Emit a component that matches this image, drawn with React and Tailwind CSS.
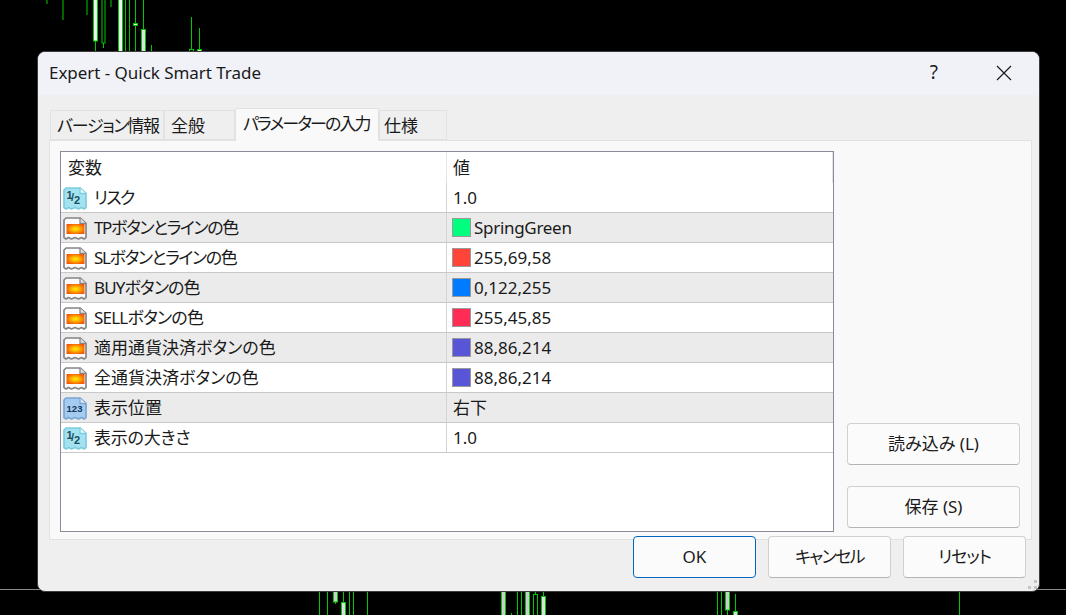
import React from 'react';

const G = '#00c800';

// [x, y1, y2] wicks and [x, y, w, h, fill] bodies of the chart behind the dialog
const wicks = [
  [47, 0, 4], [63, 0, 20], [87, 0, 15], [95.5, 41, 52], [103.5, 43, 48], [111, 0, 7],
  [125.5, 0, 52], [129.5, 0, 52], [135.5, 0, 52], [143.5, 0, 30], [151.5, 45, 52],
  [191.5, 17, 49], [199.5, 28, 49],
  [319.5, 591, 615], [327.5, 591, 615], [335.5, 602, 604], [343.5, 591, 602], [367.5, 591, 615],
  [511.5, 613, 615], [517.5, 591, 615], [521.5, 591, 615], [535.5, 591, 594], [543.5, 591, 596],
  [717.5, 591, 615], [721.5, 591, 615], [727.5, 610, 615], [735.5, 594, 611], [959.5, 591, 615],
];
const bodies = [
  [93.5, -2, 4, 43, '#f0f0f0'], [102, -2, 3, 45, '#000'], [118.5, -2, 4, 60, '#f0f0f0'],
  [133.5, 23.5, 4, 2, '#f0f0f0'], [141.5, 29.5, 4, 24, '#e0e0e0'], [189.5, 49.5, 4, 4, '#000'],
  [197.5, 49.5, 4, 4, '#ddd'],
  [333.5, 590, 4, 12, '#ccc'], [341.5, 602.5, 4, 16, '#ddd'], [349.5, 590, 4, 28, '#000'],
  [501.5, 590, 4, 28, '#ccc'], [525.5, 590, 4, 28, '#ccc'], [533.5, 594.5, 4, 24, '#000'],
  [541.5, 596.5, 4, 22, '#ddd'], [725.5, 590, 4, 20, '#ccc'], [733.5, 611.5, 4, 8, '#ddd'],
];

function Chart() {
  return (
    <svg className="absolute inset-0" width="1066" height="615">
      <path d="M0 589.5H40M1036 589.5H1066" stroke="#8a8a8a" />
      {wicks.map(([x, a, b], i) => (
        <path key={i} d={`M${x} ${a}V${b}`} stroke={G} />
      ))}
      {bodies.map(([x, y, w, h, fill], i) => (
        <rect key={i} x={x} y={y} width={w} height={h} fill={fill} stroke={G} />
      ))}
    </svg>
  );
}

const DOC = 'M3 1H17L23 6.5V20.5L21 22L18.5 20.5L15.5 22L12 20.5L8.5 22L5.5 20.5L3 22L1 20.5V3Z';

function ParamIcon({ kind }) {
  if (kind === 'color') {
    return (
      <svg width="24" height="24" viewBox="0 0 24 24" className="shrink-0">
        <defs>
          <radialGradient id="heat" cx="0.5" cy="0.5" r="0.55">
            <stop offset="0" stopColor="#fff000" />
            <stop offset="0.35" stopColor="#ffc000" />
            <stop offset="1" stopColor="#f25a08" />
          </radialGradient>
        </defs>
        <path d={DOC} fill="#fbfbfb" stroke="#858585" strokeWidth="1.7" strokeLinejoin="round" />
        <path d="M17 1V6.5H23" fill="#e4e4e4" stroke="#858585" strokeWidth="1.3" />
        <rect x="3.5" y="7" width="18" height="10" fill="url(#heat)" />
      </svg>
    );
  }
  const num = kind === 'int';
  const ink = num ? '#14365c' : '#1d4d5c';
  const edge = num ? '#7aa6d4' : '#7fcbde';
  return (
    <svg width="24" height="24" viewBox="0 0 24 24" className="shrink-0">
      <path d={DOC} fill={num ? '#a6cbf0' : '#a3e2f0'} stroke={edge} strokeWidth="1.7" strokeLinejoin="round" />
      <path d="M17 1V6.5H23" fill={num ? '#dbe9f8' : '#e4f8fb'} stroke={edge} strokeWidth="1.3" />
      {num ? (
        <text x="11.5" y="15" textAnchor="middle" fontSize="9.5" fontWeight="700" fontFamily="Liberation Sans, sans-serif" fill={ink}>
          123
        </text>
      ) : (
        <g fontSize="11" fontFamily="Liberation Sans, sans-serif" fill={ink} fontWeight="700">
          <text x="3.5" y="12">1</text>
          <text x="8" y="14">/</text>
          <text x="11" y="17">2</text>
        </g>
      )}
    </svg>
  );
}

const rows = [
  { icon: 'half', name: 'リスク', fit: 'tracking-[-1.6px]', value: '1.0' },
  { icon: 'color', name: 'TPボタンとラインの色', fit: 'tracking-[-1.4px]', value: 'SpringGreen', swatch: 'bg-[#00ff7f]' },
  { icon: 'color', name: 'SLボタンとラインの色', fit: 'tracking-[-1.4px]', value: '255,69,58', swatch: 'bg-[#ff453a]' },
  { icon: 'color', name: 'BUYボタンの色', fit: 'tracking-[-0.9px]', value: '0,122,255', swatch: 'bg-[#007aff]' },
  { icon: 'color', name: 'SELLボタンの色', fit: 'tracking-[-0.8px]', value: '255,45,85', swatch: 'bg-[#ff2d55]' },
  { icon: 'color', name: '適用通貨決済ボタンの色', value: '88,86,214', swatch: 'bg-[#5856d6]' },
  { icon: 'color', name: '全通貨決済ボタンの色', value: '88,86,214', swatch: 'bg-[#5856d6]' },
  { icon: 'int', name: '表示位置', value: '右下' },
  { icon: 'half', name: '表示の大きさ', fit: 'tracking-[-0.2px]', value: '1.0' },
];

function Tab({ active, className, children }) {
  return (
    <div
      className={`flex items-center whitespace-nowrap border border-[#e2e2e2] ${
        active ? 'relative z-10 -mb-px h-[33px] border-b-0 bg-[#f9f9f9] pb-[2px]' : 'h-[30px] bg-[#efefef] pt-[1px]'
      } ${className}`}
    >
      {children}
    </div>
  );
}

function Btn({ primary, className = '', children }) {
  return (
    <button
      className={`flex h-[42px] items-center justify-center rounded-[4px] border bg-[#fbfbfb] text-[17px] text-[#1a1a1a] ${
        primary ? 'border-[#0067c0]' : 'border-[#d0d0d0] border-b-[#b4b4b4]'
      } ${className}`}
    >
      {children}
    </button>
  );
}

export default function App() {
  return (
    <div className="relative h-[615px] w-[1066px] overflow-hidden bg-black font-['Noto_Sans','Noto_Sans_CJK_JP',sans-serif] text-[#1a1a1a] [font-feature-settings:'palt']">
      <Chart />
      <div className="absolute left-[37px] top-[51px] flex h-[541px] w-[1003px] flex-col overflow-hidden rounded-[8px] border border-[#3c3c3c] bg-[#efefef]">
        <div className="flex h-[43px] shrink-0 items-center bg-[#f0f2f8] pb-[2px] pl-[11px] pr-[27px] text-[17px]">
          <span className="tracking-[-0.04px]">Expert - Quick Smart Trade</span>
          <span className="ml-auto text-[19px]">?</span>
          <svg width="16" height="16" viewBox="0 0 16 16" className="ml-[58px]">
            <path d="M1 1L15 15M15 1L1 15" stroke="#1a1a1a" strokeWidth="1.2" fill="none" />
          </svg>
        </div>

        <div className="box-content flex h-[32px] items-end pl-[12px] pt-[13px] text-[17px]">
          <Tab className="w-[114px] pl-[6px] tracking-[-1.3px]">バージョン情報</Tab>
          <Tab className="w-[71px] pl-[6px]">全般</Tab>
          <Tab active className="w-[144px] pl-[7px] tracking-[-1.9px]">パラメーターの入力</Tab>
          <Tab className="w-[68px] pl-[4px]">仕様</Tab>
        </div>

        <div className="ml-[11px] flex h-[400px] w-[983px] gap-[13px] border border-[#e2e2e2] bg-[#f9f9f9] pl-[10px] pt-[10px]">
          <div className="h-[381px] w-[774px] border border-[#8a8a9a] bg-white text-[17px]">
            <div className="flex h-[31px]">
              <div className="flex w-[386px] items-center border-r border-[#e4e4e4] pl-[7px]">変数</div>
              <div className="flex flex-1 items-center border-r border-[#e4e4e4] pl-[6px]">値</div>
            </div>
            {rows.map((row, i) => (
              <div key={i} className={`flex h-[30px] border-b border-[#c8c8c8] ${i % 2 ? 'bg-[#ebebeb]' : 'bg-white'}`}>
                <div className="flex w-[386px] border-r border-[#d4d4d4] pl-[2px]">
                  <div className="mt-[4px]">
                    <ParamIcon kind={row.icon} />
                  </div>
                  <span className={`ml-[7px] self-center pt-[1px] ${row.fit || ''}`}>{row.name}</span>
                </div>
                <div className="flex flex-1 items-center pl-[5px]">
                  {row.swatch && <span className={`mr-[3px] h-[19px] w-[19px] border border-[#999] ${row.swatch}`} />}
                  <span className={`pt-[1px] ${row.swatch ? '' : 'pl-px'} ${row.value === 'SpringGreen' ? 'tracking-[-0.3px]' : ''}`}>{row.value}</span>
                </div>
              </div>
            ))}
          </div>
          <div className="flex h-[381px] w-[173px] flex-col justify-end gap-[21px] pb-[4px]">
            <Btn className="w-full">読み込み (L)</Btn>
            <Btn className="w-full">保存 (S)</Btn>
          </div>
        </div>

        <div className="relative -mt-[4px] flex justify-end gap-[12px] pr-[13px]">
          <Btn primary className="w-[123px]">OK</Btn>
          <Btn className="w-[123px] tracking-[-1.6px]">キャンセル</Btn>
          <Btn className="w-[123px] tracking-[-1px]">リセット</Btn>
        </div>

        <svg width="10" height="10" viewBox="0 0 10 10" className="absolute bottom-[1px] right-[1px]">
          <path d="M6 0h3v3H6zM0 6h3v3H0zM6 6h3v3H6z" fill="#c4c4c4" />
        </svg>
      </div>
    </div>
  );
}
